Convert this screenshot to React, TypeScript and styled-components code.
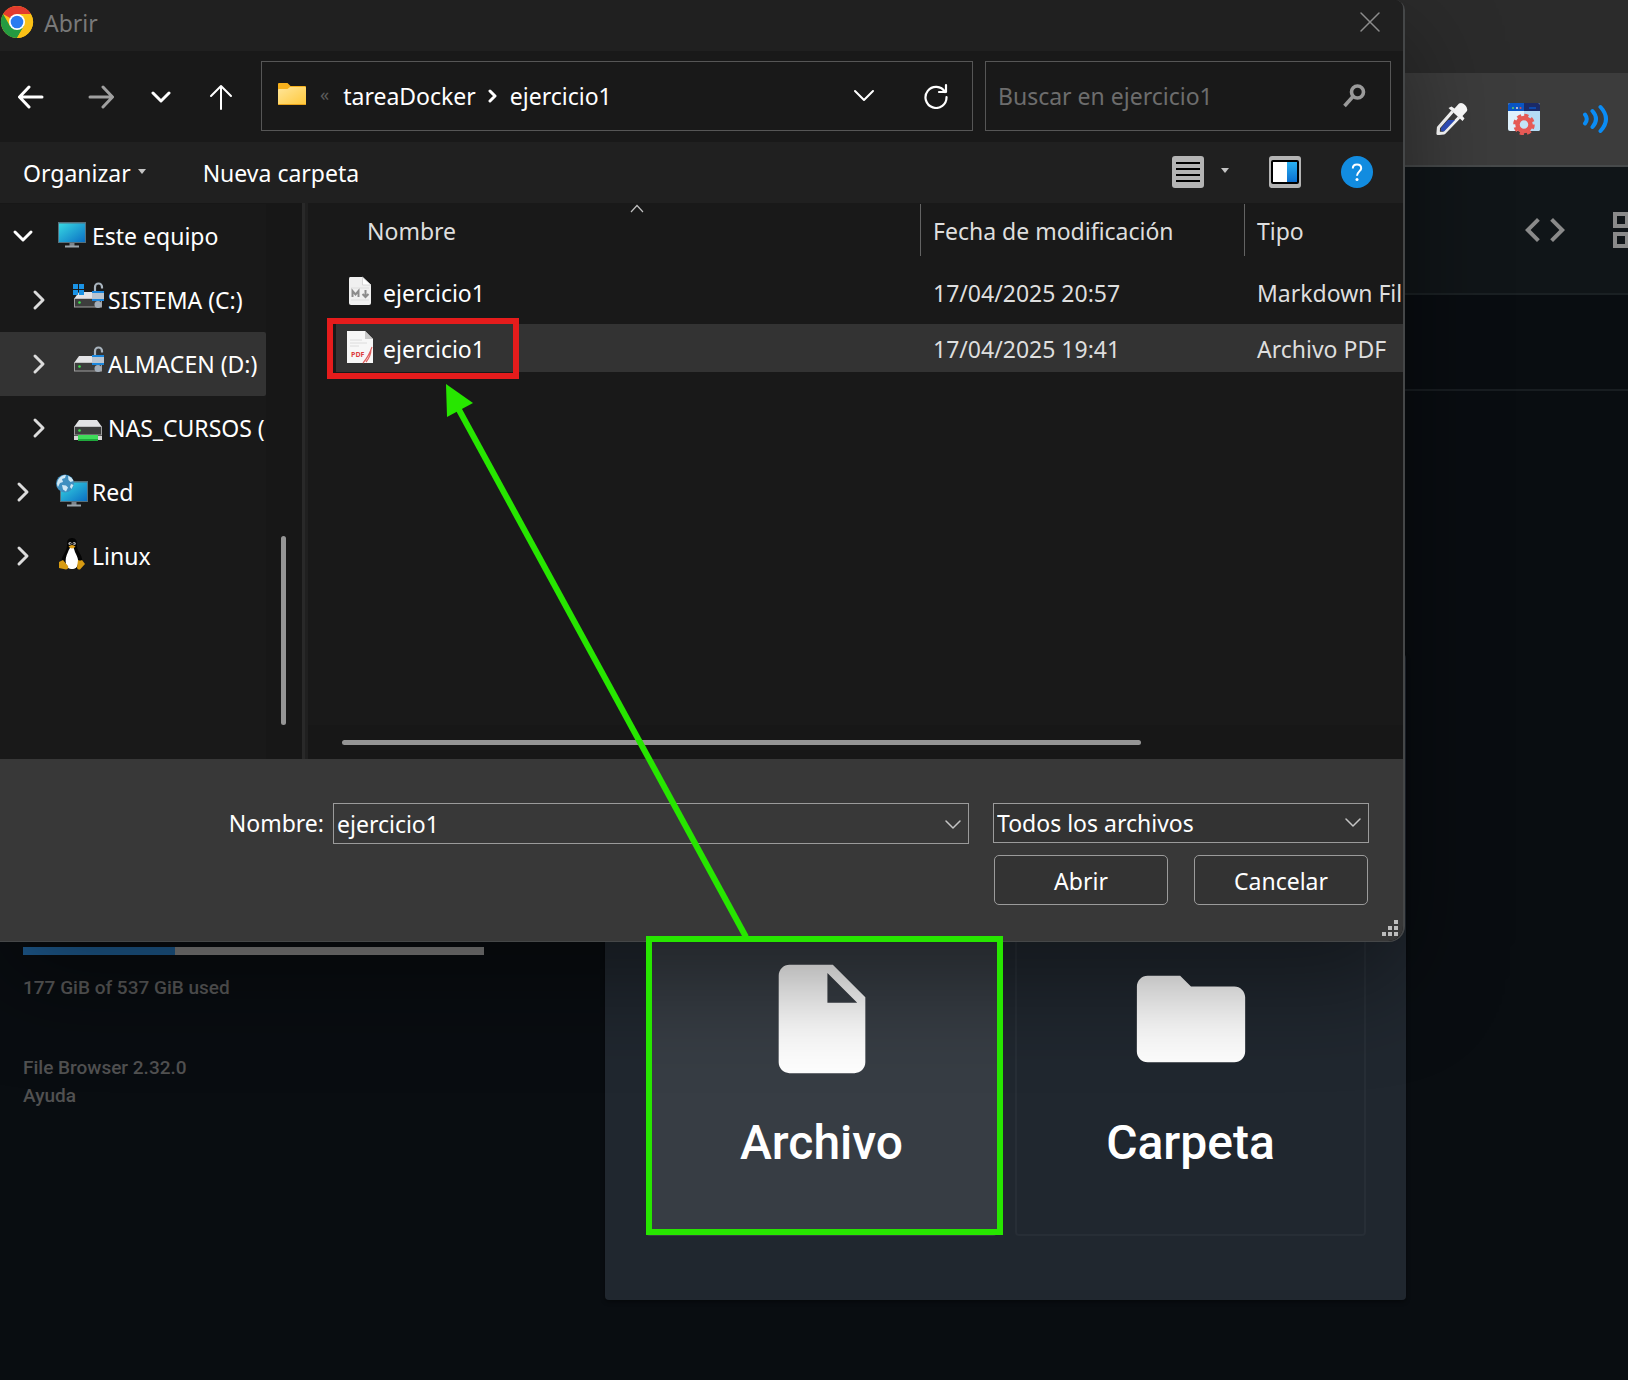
import React from "react";
import styled, { createGlobalStyle } from "styled-components";

const Global = createGlobalStyle`
  *, *::before, *::after { box-sizing: border-box; }
  body { margin: 0; background: #090d11; }
  button, input, select { font: inherit; color: inherit; }
`;

const UI = `"Noto Sans", "Open Sans", sans-serif`;
const WEB = `Roboto, "Liberation Sans", sans-serif`;

/* ---------- browser behind the dialog ---------- */

const Screen = styled.div`
  position: relative;
  min-height: 100vh;
  overflow: hidden;
  display: flex;
  flex-direction: column;
  font-family: ${WEB};
`;
const TabStrip = styled.div`
  height: 73px;
  background: #2b2b2b;
`;
const BrowserBar = styled.div`
  height: 94px;
  padding-right: 18px;
  display: flex;
  align-items: center;
  justify-content: flex-end;
  gap: 40px;
  background: #3c3c3c;
  border-bottom: 2px solid #474a4b;
`;
const SiteHeader = styled.header`
  height: 128px;
  margin-right: -27px;
  display: flex;
  align-items: center;
  justify-content: flex-end;
  gap: 38px;
  background: #101518;
  border-bottom: 2px solid #1a2023;
`;
const Breadcrumbs = styled.div`
  height: 96px;
  border-bottom: 2px solid #181d21;
`;
const Ghost = styled.button`
  display: flex;
  align-items: center;
  justify-content: center;
  padding: 0;
  border: 0;
  background: none;
  flex: none;
`;
const Site = styled.main`
  flex: 1;
  display: grid;
  grid-template-columns: 605px minmax(0, 1fr) 222px;
  align-items: start;
`;
const Usage = styled.aside`
  padding: 556px 121px 0 23px;
  font-size: 19px;
  line-height: 28px;
  font-weight: 500;
  color: #5a5a5a;
`;
const Meter = styled.div`
  height: 8px;
  background: #868686;
`;
const MeterFill = styled.div`
  height: 100%;
  background: #1f5f96;
`;
const UsageText = styled.p`
  margin: 19px 0 52px;
`;
const UsageLink = styled.a`
  display: block;
  color: #515151;
  text-decoration: none;
`;
const UploadCard = styled.section`
  margin-top: 263px;
  padding: 282px 40px 64px 41px;
  display: grid;
  grid-template-columns: 1fr 1fr;
  gap: 18px;
  background: #20272f;
  border-radius: 4px;
  box-shadow: 0 2px 4px rgba(0, 0, 0, 0.4);
`;
const UploadOption = styled.button<{ $active?: boolean }>`
  display: flex;
  flex-direction: column;
  align-items: center;
  gap: 31px;
  padding: 16px 0 63px;
  border: 2px solid ${(p) => (p.$active ? "#373d44" : "#272e36")};
  border-radius: 4px;
  background: ${(p) => (p.$active ? "#373d44" : "none")};
  color: #fff;
  font-size: 48px;
  line-height: 56px;
  font-weight: 500;
`;

/* ---------- file dialog ---------- */

const Dialog = styled.div`
  position: absolute;
  top: 0;
  left: 0;
  width: calc(100% - 223px);
  background: #191919;
  border: solid #454748;
  border-width: 0 2px 1px 0;
  border-radius: 0 10px 16px 0;
  box-shadow: 0 40px 100px rgba(0, 0, 0, 0.42);
  color: #fff;
  font-family: ${UI};
  font-size: 23px;
  line-height: 30px;
`;
const DialogClip = styled.div`
  overflow: hidden;
  border-radius: 0 8px 15px 0;
`;
const TitleBar = styled.div`
  height: 51px;
  padding: 0 22px 8px 0;
  display: flex;
  align-items: center;
  gap: 10px;
  background: #202020;
  color: #797979;
`;
const Title = styled.h1`
  flex: 1;
  margin: 0;
  padding-top: 2px;
  font-size: 23px;
  font-weight: 400;
`;
const NavBar = styled.div`
  height: 91px;
  padding: 0 12px 2px;
  display: flex;
  align-items: center;
  gap: 12px;
`;
const NavButtons = styled.div`
  width: 237px;
  padding: 2px 0 0 1px;
  display: flex;
  align-items: center;
  gap: 24px;
`;
const NavButton = styled(Ghost)`
  width: 36px;
  height: 36px;
  &:nth-child(1) { margin-right: 10px; }
`;
const Field = styled.div`
  height: 70px;
  display: flex;
  align-items: center;
  border: 1px solid #565656;
`;
const Address = styled(Field)`
  flex: 1;
  min-width: 0;
  padding: 0 23px 0 16px;
`;
const Crumb = styled(Ghost)`
  padding: 0 12px 0 13px;
`;
const CrumbOverflow = styled(Ghost)`
  padding: 0 1px 4px 14px;
  color: #5c5c5c;
  font-size: 18px;
`;
const AddressTools = styled.div`
  margin-left: auto;
  display: flex;
  align-items: center;
  gap: 48px;
`;
const SearchBox = styled(Field)`
  width: 406px;
  padding: 0 24px 0 12px;
`;
const SearchInput = styled.input`
  flex: 1;
  min-width: 0;
  padding: 0;
  border: 0;
  outline: 0;
  background: none;
  &::placeholder { color: #6d6d6d; opacity: 1; }
`;
const CommandBar = styled.div`
  height: 61px;
  padding: 0 30px 0 23px;
  display: flex;
  align-items: center;
  background: #202020;
`;
const Command = styled(Ghost)`
  gap: 7px;
  margin-right: 57px;
`;
const ViewTools = styled.div`
  margin-left: auto;
  padding-bottom: 2px;
  display: flex;
  gap: 40px;
`;
const ViewButton = styled(Ghost)`
  gap: 17px;
`;
const Content = styled.div`
  height: 556px;
  display: grid;
  grid-template-columns: 302px minmax(0, 1fr);
`;
const TreePane = styled.nav`
  display: flex;
  gap: 15px;
  padding-top: 1px;
  background: #171717;
`;
const Tree = styled.ul`
  width: 266px;
  margin: 0;
  padding: 0;
  list-style: none;
  background: #191919;
`;
const TreeRow = styled.li<{ $child?: boolean; $selected?: boolean }>`
  height: 64px;
  padding-left: ${(p) => (p.$child ? 28 : 12)}px;
  display: flex;
  align-items: center;
  overflow: hidden;
  white-space: nowrap;
  border-radius: 0 2px 2px 0;
  background: ${(p) => (p.$selected ? "#333" : "none")};
`;
const TreeIcon = styled.span`
  width: 36px;
  height: 36px;
  margin: 0 2px 4px 20px;
  display: flex;
  flex: none;
`;
const VThumb = styled.div`
  width: 5px;
  height: 189px;
  margin-top: 332px;
  border-radius: 3px;
  background: #959595;
`;
const ListPane = styled.div`
  border-left: 3px solid #292929;
  padding: 1px 0 0 3px;
  display: flex;
  flex-direction: column;
  min-width: 0;
  overflow: hidden;
  background: linear-gradient(90deg, #202020 3px, #191919 3px);
`;
const FileTable = styled.table`
  width: 100%;
  table-layout: fixed;
  border-collapse: collapse;
  border-spacing: 0;
  color: #dedede;
`;
const Th = styled.th<{ $w?: number }>`
  width: ${(p) => (p.$w ? p.$w + "px" : "auto")};
  height: 60px;
  padding: 0;
  font-weight: 400;
  text-align: left;
  vertical-align: top;
`;
const HeadCell = styled.div<{ $first?: boolean }>`
  position: relative;
  height: 52px;
  padding: 2px 0 0 ${(p) => (p.$first ? 59 : 12)}px;
  display: flex;
  align-items: center;
  white-space: nowrap;
  border-left: ${(p) => (p.$first ? "0" : "1px solid #636363")};
`;
const SortMark = styled.svg`
  position: absolute;
  top: 0;
  left: calc(50% + 16px);
`;
const Td = styled.td`
  height: 56px;
  padding: 4px 0;
`;
const Cell = styled.div<{ $first?: boolean; $selected?: boolean }>`
  height: 48px;
  margin-left: ${(p) => (p.$first ? 28 : 0)}px;
  padding: 2px 0 0 ${(p) => (p.$first ? 10 : 13)}px;
  display: flex;
  align-items: center;
  gap: 9px;
  overflow: hidden;
  white-space: nowrap;
  color: ${(p) => (p.$first ? "#fff" : "inherit")};
  background: ${(p) => (p.$selected ? "#333" : "none")};
`;
const HTrack = styled.div`
  margin-top: auto;
  height: 34px;
  padding: 15px 262px 0 34px;
  background: #171717;
`;
const HThumb = styled.div`
  height: 5px;
  border-radius: 3px;
  background: #959595;
`;
const Footer = styled.div`
  position: relative;
  height: 182px;
  padding: 44px 34px 0 0;
  display: grid;
  grid-template-columns: 333px minmax(0, 1fr) 376px;
  row-gap: 11px;
  align-content: start;
  align-items: start;
  background: #383838;
`;
const NameLabel = styled.label`
  padding-right: 9px;
  line-height: 41px;
  text-align: right;
`;
const NameCombo = styled.div`
  height: 41px;
  margin-right: 24px;
  padding: 0 7px 0 3px;
  display: flex;
  align-items: center;
  border: 1px solid #9b9b9b;
`;
const NameInput = styled(SearchInput)``;
const TypeWrap = styled.div`
  position: relative;
  height: 40px;
`;
const TypeSelect = styled.select`
  width: 100%;
  height: 40px;
  padding: 0 40px 0 3px;
  appearance: none;
  border: 1px solid #9b9b9b;
  border-radius: 0;
  background: #333;
`;
const SelectMark = styled.span`
  position: absolute;
  right: 8px;
  top: 12px;
  display: flex;
  pointer-events: none;
`;
const Actions = styled.div`
  grid-column: 3;
  padding: 0 1px;
  display: grid;
  grid-template-columns: 1fr 1fr;
  gap: 26px;
`;
const Action = styled.button`
  height: 50px;
  padding: 2px 0 0;
  border: 1px solid #9b9b9b;
  border-radius: 5px;
  background: #333;
`;
const Grip = styled.svg`
  position: absolute;
  right: 5px;
  bottom: 5px;
`;
const Notes = styled.svg`
  position: absolute;
  top: 0;
  left: 0;
  pointer-events: none;
`;

/* ---------- icons ---------- */

type StrokeProps = { d: string; w: number; h: number; sw?: number; c?: string };
const Stroke = ({ d, w, h, sw = 2, c = "#fff" }: StrokeProps) => (
  <svg width={w} height={h} viewBox={`0 0 ${w} ${h}`} fill="none" stroke={c} strokeWidth={sw} strokeLinecap="round" strokeLinejoin="round">
    <path d={d} />
  </svg>
);

const Caret = () => (
  <svg width="8" height="8" viewBox="0 0 8 8"><path d="M0 0h8L4 5z" fill="#c4c4c4" /></svg>
);

const ChromeLogo = () => (
  <svg width="34" height="34" viewBox="0 0 34 34">
    <circle cx="17" cy="17" r="16" fill="#fbc116" />
    <path d="M17 17 L3.1 9 A16 16 0 0 1 30.9 9 Z" fill="#e33b2e" />
    <path d="M3.1 9 A16 16 0 0 0 17 33 L24 21 L10 21 Z" fill="#249a41" />
    <path d="M17 9h13.9A16 16 0 0 1 17 33l7-12z" fill="#fbc116" />
    <circle cx="17" cy="17" r="8" fill="#fff" />
    <circle cx="17" cy="17" r="6.3" fill="#2a7bf0" />
  </svg>
);

const FolderIcon = () => (
  <svg width="28" height="28" viewBox="0 0 28 28">
    <defs>
      <linearGradient id="fold" x1="0" y1="0" x2="1" y2="1">
        <stop offset="0" stopColor="#ffe69a" /><stop offset="1" stopColor="#ffc83a" />
      </linearGradient>
    </defs>
    <path d="M0 2q0-1 1-1h8.500l3 3H27q1 0 1 1v14H0z" fill="#f7b11c" />
    <path d="M0 8q0-1 1-1h8.500L12 5h15q1 0 1 1v16q0 1-1 1H1q-1 0-1-1z" fill="url(#fold)" />
    <path d="M0 22h28q0 1-1 1H1q-1 0-1-1z" fill="#e9a31b" />
  </svg>
);

const MonitorShape = () => (
  <>
    <rect x="0" y="0" width="28" height="21" fill="#56707c" />
    <rect x="1" y="1.500" width="26" height="18.500" fill="url(#mon)" />
    <path d="M11.500 21h5v3h-5z" fill="#7d858c" />
    <path d="M7 23.500h14v2H7z" fill="#9aa3aa" />
  </>
);
const MonGradient = () => (
  <defs>
    <linearGradient id="mon" x1="0" y1="0" x2="1" y2="1">
      <stop offset="0" stopColor="#37d8e2" /><stop offset="1" stopColor="#0b6fc4" />
    </linearGradient>
  </defs>
);
const MonitorIcon = () => (
  <svg width="36" height="36" viewBox="0 0 36 36">
    <MonGradient />
    <g transform="translate(4 6)"><MonitorShape /></g>
  </svg>
);
const NetworkIcon = () => (
  <svg width="36" height="36" viewBox="0 0 36 36">
    <MonGradient />
    <g transform="translate(6 9)"><MonitorShape /></g>
    <circle cx="11" cy="11.500" r="9" fill="#3f8fc0" />
    <path d="M4 8q3-5 8-5l-1 3-3 1 1 3-3 1-2 4q-2-3 0-7zM14 4q4 1 5.500 5l-3 1-2-2zM8 13l4 .5 2 2-2 4-3-2zM17 12l2.500 1-2 4-1.500-2z" fill="#cfe8f5" />
  </svg>
);

const DriveIcon = ({ win, lock, net }: { win?: boolean; lock?: boolean; net?: boolean }) => (
  <svg width="36" height="36" viewBox="0 0 36 36">
    <path d="M9 12h18l5 7H4z" fill="#e3e3e6" />
    <rect x="4" y="18.500" width="28" height="9" fill="#9f9f9f" />
    <rect x="5" y="19" width="26" height="7.500" fill="#3d3d3d" />
    <circle cx="9.500" cy="22.500" r="1.300" fill="#3be04a" />
    {win && <path d="M3 4h5v5H3zM9 4h5v5H9zM3 10h5v5H3zM9 10h5v5H9z" fill="#1a93e6" />}
    {lock && (
      <g>
        <path d="M25 12V7a3.500 3.500 0 0 1 7 0V8.500" fill="none" stroke="#a9b4be" strokeWidth="2.200" />
        <rect x="22" y="11" width="12" height="10" fill="#b9c4d0" />
        <path d="M22 11h12v2H22zM22 19h12v2H22z" fill="#1a86dd" />
        <circle cx="28" cy="24.500" r="3.500" fill="#a3adb8" />
      </g>
    )}
    {net && (
      <g>
        <rect x="4" y="28" width="28" height="4" fill="#d5d5d5" />
        <rect x="8" y="27" width="20" height="6" fill="#3fdc5a" />
        <path d="M8 31h20v2H8z" fill="#1fa83c" />
      </g>
    )}
  </svg>
);

const TuxIcon = () => (
  <svg width="36" height="36" viewBox="0 0 36 36">
    <path d="M18 2c-4 0-5 3-5 6 0 5-1 6-3 10-2 3-3 6-2 9l5 6h10l5-6c1-4-1-8-3-11s-2-5-2-8-1-6-5-6z" fill="#050505" />
    <path d="M18 11c-2 0-3 2-4 5-2 4-3 8-2 12 1 4 3 5 6 5s5-1 6-5-1-8-3-12c-1-3-1-5-3-5z" fill="#fff" />
    <circle cx="16" cy="7.500" r="1.600" fill="#bbb" /><circle cx="20.200" cy="7.500" r="1.600" fill="#bbb" />
    <circle cx="16.400" cy="7.700" r=".7" fill="#111" /><circle cx="19.800" cy="7.700" r=".7" fill="#111" />
    <path d="M14.500 10.500q3.500-3 7 0-3.500 4-7 0z" fill="#e2a117" />
    <path d="M5 26l4-2 5 6q1 3-2 3.500L5 32z" fill="#d79b12" />
    <path d="M31 28l-3-4q-2 1-4 0l-1 8q1 2 3 1.500z" fill="#d79b12" />
  </svg>
);

const DocIcon = ({ pdf }: { pdf?: boolean }) => (
  <svg width="28" height="38" viewBox="0 0 28 38">
    {pdf ? (
      <g>
        <path d="M1 1h18l8 8v24H1z" fill="#f7f7f7" />
        <path d="M19 1l8 8h-8z" fill="#c9c9c9" />
        <path d="M4 10h12M4 13h17M4 16h9" stroke="#dcdcdc" strokeWidth="1" />
        <path d="M17 33q6-7 9-16M20 32q5-6 5-13" stroke="#e0605f" strokeWidth="1.200" fill="none" />
        <text x="5" y="27" fontFamily="Open Sans" fontWeight="700" fontSize="7" fill="#dd3b3b">PDF</text>
      </g>
    ) : (
      <g>
        <path d="M4 3h12l9 8v18q0 2-2 2H5q-2 0-2-2V5q0-2 1-2z" fill="#f0f0f0" />
        <path d="M16.500 3l8.500 8h-8.500z" fill="#fff" stroke="#cfcfcf" strokeWidth=".8" />
        <path d="M5 14h18M5 26h18" stroke="#dedede" strokeWidth="1" />
        <path d="M6.500 23v-6l3 3.500 3-3.500v6" stroke="#8b8b8b" strokeWidth="2" fill="none" />
        <path d="M19.500 16v6M16.500 20l3 3 3-3" stroke="#8b8b8b" strokeWidth="2" fill="none" />
      </g>
    )}
  </svg>
);

const SearchIcon = () => (
  <svg width="24" height="24" viewBox="0 0 24 24" fill="none" stroke="#9a9a9a">
    <circle cx="15.500" cy="8" r="6" strokeWidth="3.600" />
    <path d="M11 12.500L2.500 22" strokeWidth="3.600" />
  </svg>
);
const ListViewIcon = () => (
  <svg width="32" height="32" viewBox="0 0 32 32">
    <rect width="32" height="32" rx="3" fill="#b4b4b4" />
    <path d="M4 7h24M4 13h24M4 19h24M4 25h24" stroke="#000" strokeWidth="2" />
  </svg>
);
const PreviewIcon = () => (
  <svg width="32" height="32" viewBox="0 0 32 32">
    <defs><linearGradient id="pv" x1="0" y1="0" x2="0" y2="1"><stop offset="0" stopColor="#29b0f0" /><stop offset="1" stopColor="#0a6fd0" /></linearGradient></defs>
    <rect width="32" height="32" rx="3" fill="#b4b4b4" />
    <rect x="2" y="4" width="28" height="24" rx="2" fill="#000" />
    <rect x="4" y="6" width="14" height="20" fill="#fff" />
    <rect x="18" y="6" width="10" height="20" fill="url(#pv)" />
  </svg>
);
const HelpIcon = () => (
  <svg width="32" height="32" viewBox="0 0 32 32">
    <circle cx="16" cy="16" r="16" fill="#128ce0" />
    <path d="M11.800 12.500q0-4 4.200-4t4.200 3.700c0 3-4.200 3.600-4.200 7.600" fill="none" stroke="#fff" strokeWidth="2" />
    <circle cx="16" cy="23.600" r="1.500" fill="#fff" />
  </svg>
);
const DropperIcon = () => (
  <svg width="32" height="32" viewBox="0 0 32 32">
    <path d="M16.500 8.500L2.500 24.500 2 30.500l6-.5L23 14.500" fill="none" stroke="#fff" strokeWidth="3.200" strokeLinejoin="round" />
    <path d="M5 28v-3l7-8h7L8 28.500z" fill="#2f4fc0" />
    <path d="M12.500 5l3-1.500 3 2L23 0.500q3-1.500 6 1.500t2 6l-4.500 5 2 2.500-2 2.500z" fill="#fff" />
  </svg>
);
const WindowGearIcon = () => (
  <svg width="32" height="32" viewBox="0 0 32 32">
    <rect width="32" height="28" rx="2" fill="#dff1fd" />
    <path d="M16 8h16v18q0 2-2 2H16z" fill="#b5dcf5" />
    <path d="M0 8V2q0-2 2-2h14v8z" fill="#0a55c4" />
    <path d="M16 0h14q2 0 2 2v6H16z" fill="#1b2a66" />
    <circle cx="5" cy="5" r="1" fill="#5cd06a" /><circle cx="9" cy="5" r="1" fill="#f0d9d9" /><circle cx="12.500" cy="5" r="1" fill="#e5544d" />
    <path d="M21 5h7" stroke="#0a55c4" strokeWidth="1.500" />
    <circle cx="16" cy="21.500" r="9.300" fill="none" stroke="#e65a55" strokeWidth="3" strokeDasharray="4.200 3.100" />
    <circle cx="16" cy="21.500" r="6.500" fill="#c4e6f7" stroke="#e65a55" strokeWidth="4.500" />
  </svg>
);
const WavesIcon = () => (
  <svg width="30" height="32" viewBox="0 0 30 32" fill="none" stroke="#0a8cf5" strokeWidth="4" strokeLinecap="round">
    <path d="M5 11.500q3.500 4.500 0 9M12.500 8q7 8 0 16M20.500 4q11 12 0 24" />
  </svg>
);
const Material = ({ d, size, fill = "#fff" }: { d: string; size: number; fill?: string }) => (
  <svg width={size} height={size} viewBox="0 0 24 24" fill={fill}><path d={d} /></svg>
);

/* ---------- data ---------- */

const tree = [
  { label: "Este equipo", icon: <MonitorIcon />, open: true },
  { label: "SISTEMA (C:)", icon: <DriveIcon win lock />, child: true },
  { label: "ALMACEN (D:)", icon: <DriveIcon lock />, child: true, selected: true },
  { label: "NAS_CURSOS (", icon: <DriveIcon net />, child: true },
  { label: "Red", icon: <NetworkIcon /> },
  { label: "Linux", icon: <TuxIcon /> },
];

const files = [
  { name: "ejercicio1", date: "17/04/2025 20:57", type: "Markdown File", pdf: false },
  { name: "ejercicio1", date: "17/04/2025 19:41", type: "Archivo PDF", pdf: true },
];

const used = 177;
const total = 537;

export default function App() {
  return (
    <Screen>
      <Global />
      <TabStrip />
      <BrowserBar>
        <Ghost aria-label="Cuentagotas"><DropperIcon /></Ghost>
        <Ghost aria-label="Configuración"><WindowGearIcon /></Ghost>
        <Ghost aria-label="Lectura en voz alta"><WavesIcon /></Ghost>
      </BrowserBar>
      <SiteHeader>
        <Ghost aria-label="Código">
          <Material size={48} fill="#8a8a8a" d="M9.400 16.600L4.800 12l4.600-4.600L8 6l-6 6 6 6 1.400-1.400zm5.200 0l4.600-4.600-4.600-4.600L16 6l6 6-6 6-1.400-1.400z" />
        </Ghost>
        <Ghost aria-label="Vista">
          <Material size={48} fill="#8a8a8a" d="M3 3v8h8V3H3zm6 6H5V5h4v4zm-6 4v8h8v-8H3zm6 6H5v-4h4v4zm4-16v8h8V3h-8zm6 6h-4V5h4v4zm-6 4v8h8v-8h-8zm6 6h-4v-4h4v4z" />
        </Ghost>
      </SiteHeader>
      <Breadcrumbs />
      <Site>
        <Usage>
          <Meter><MeterFill style={{ width: `${(used / total) * 100}%` }} /></Meter>
          <UsageText>{used} GiB of {total} GiB used</UsageText>
          <UsageLink href="#version">File Browser 2.32.0</UsageLink>
          <UsageLink href="#help">Ayuda</UsageLink>
        </Usage>
        <UploadCard>
          <UploadOption $active>
            <Material size={130} d="M6 2c-1.100 0-1.990.9-1.990 2L4 20c0 1.100.89 2 1.990 2H18c1.100 0 2-.9 2-2V8l-6-6H6zm7 7V3.500L18.500 9H13z" />
            Archivo
          </UploadOption>
          <UploadOption>
            <Material size={130} d="M10 4H4c-1.100 0-1.990.9-1.990 2L2 18c0 1.100.9 2 2 2h16c1.100 0 2-.9 2-2V8c0-1.100-.9-2-2-2h-8l-2-2z" />
            Carpeta
          </UploadOption>
        </UploadCard>
      </Site>

      <Dialog role="dialog" aria-label="Abrir">
        <DialogClip>
          <TitleBar>
            <ChromeLogo />
            <Title>Abrir</Title>
            <Ghost aria-label="Cerrar"><Stroke d="M2 2l18 18M20 2L2 20" w={22} h={22} sw={1.5} c="#8c8c8c" /></Ghost>
          </TitleBar>
          <NavBar>
            <NavButtons>
              <NavButton aria-label="Atrás"><Stroke d="M24 13H2M11 3L1.500 13l9.500 10" w={26} h={26} sw={3} /></NavButton>
              <NavButton aria-label="Adelante"><Stroke d="M2 13h22M15 3l9.500 10-9.500 10" w={26} h={26} sw={3} c="#a0a0a0" /></NavButton>
              <NavButton aria-label="Recientes"><Stroke d="M2 3l8 8 8-8" w={20} h={14} sw={3} /></NavButton>
              <NavButton aria-label="Subir"><Stroke d="M13 25V2M3 12L13 2l10 10" w={26} h={26} sw={2} /></NavButton>
            </NavButtons>
            <Address>
              <FolderIcon />
              <CrumbOverflow>«</CrumbOverflow>
              <Crumb>tareaDocker</Crumb>
              <Stroke d="M2 2l5 5-5 5" w={9} h={14} sw={3} />
              <Crumb>ejercicio1</Crumb>
              <AddressTools>
                <Ghost aria-label="Historial"><Stroke d="M2 2l9 9 9-9" w={22} h={13} sw={2} /></Ghost>
                <Ghost aria-label="Actualizar"><Stroke d="M22 9A10.500 10.500 0 1 0 23.500 14M23 2v7h-7" w={26} h={26} sw={2.2} /></Ghost>
              </AddressTools>
            </Address>
            <SearchBox>
              <SearchInput aria-label="Buscar" placeholder="Buscar en ejercicio1" />
              <SearchIcon />
            </SearchBox>
          </NavBar>
          <CommandBar>
            <Command>Organizar <Caret /></Command>
            <Command>Nueva carpeta</Command>
            <ViewTools>
              <ViewButton aria-label="Cambiar vista"><ListViewIcon /><Caret /></ViewButton>
              <ViewButton aria-label="Panel de vista previa"><PreviewIcon /></ViewButton>
              <ViewButton aria-label="Ayuda"><HelpIcon /></ViewButton>
            </ViewTools>
          </CommandBar>
          <Content>
            <TreePane>
              <Tree>
                {tree.map((t) => (
                  <TreeRow key={t.label} $child={t.child} $selected={t.selected}>
                    {t.open
                      ? <Stroke d="M3 7l8 8 8-8" w={22} h={22} sw={3} />
                      : <Stroke d="M7 3l8 8-8 8" w={22} h={22} sw={3} c="#dcdcdc" />}
                    <TreeIcon>{t.icon}</TreeIcon>
                    {t.label}
                  </TreeRow>
                ))}
              </Tree>
              <VThumb />
            </TreePane>
            <ListPane>
              <FileTable>
                <thead>
                  <tr>
                    <Th>
                      <HeadCell $first>
                        Nombre
                        <SortMark width="14" height="9" viewBox="0 0 14 9"><path d="M1 8l6-6.500L13 8" fill="none" stroke="#c0c0c0" strokeWidth="1.200" /></SortMark>
                      </HeadCell>
                    </Th>
                    <Th $w={324}><HeadCell>Fecha de modificación</HeadCell></Th>
                    <Th $w={159}><HeadCell>Tipo</HeadCell></Th>
                  </tr>
                </thead>
                <tbody>
                  {files.map((f) => (
                    <tr key={f.type}>
                      <Td><Cell $first $selected={f.pdf}><DocIcon pdf={f.pdf} />{f.name}</Cell></Td>
                      <Td><Cell $selected={f.pdf}>{f.date}</Cell></Td>
                      <Td><Cell $selected={f.pdf}>{f.type}</Cell></Td>
                    </tr>
                  ))}
                </tbody>
              </FileTable>
              <HTrack><HThumb /></HTrack>
            </ListPane>
          </Content>
          <Footer>
            <NameLabel htmlFor="file-name">Nombre:</NameLabel>
            <NameCombo>
              <NameInput id="file-name" defaultValue="ejercicio1" />
              <Ghost aria-label="Mostrar nombres"><Stroke d="M1 4l7 7 7-7" w={16} h={14} sw={1.5} c="#c4c4c4" /></Ghost>
            </NameCombo>
            <TypeWrap>
              <TypeSelect aria-label="Tipo de archivo"><option>Todos los archivos</option></TypeSelect>
              <SelectMark><Stroke d="M1 4l7 7 7-7" w={16} h={14} sw={1.5} c="#c4c4c4" /></SelectMark>
            </TypeWrap>
            <Actions>
              <Action>Abrir</Action>
              <Action>Cancelar</Action>
            </Actions>
            <Grip width="16" height="16" viewBox="0 0 16 16">
              <path d="M12 0h4v4h-4zM6 6h4v4H6zM12 6h4v4h-4zM0 12h4v4H0zM6 12h4v4H6zM12 12h4v4h-4z" fill="#bdbdbd" />
            </Grip>
          </Footer>
        </DialogClip>
      </Dialog>

      <Notes width="1010" height="1240" viewBox="0 0 1010 1240" fill="none">
        <rect x="330" y="321" width="186" height="55" stroke="#e51c1c" strokeWidth="6" />
        <rect x="649" y="939" width="351" height="293" stroke="#27e600" strokeWidth="6" />
        <path d="M746 937L458 408" stroke="#27e600" strokeWidth="6" />
        <path d="M446 384l27 19-26 14z" fill="#27e600" />
      </Notes>
    </Screen>
  );
}
